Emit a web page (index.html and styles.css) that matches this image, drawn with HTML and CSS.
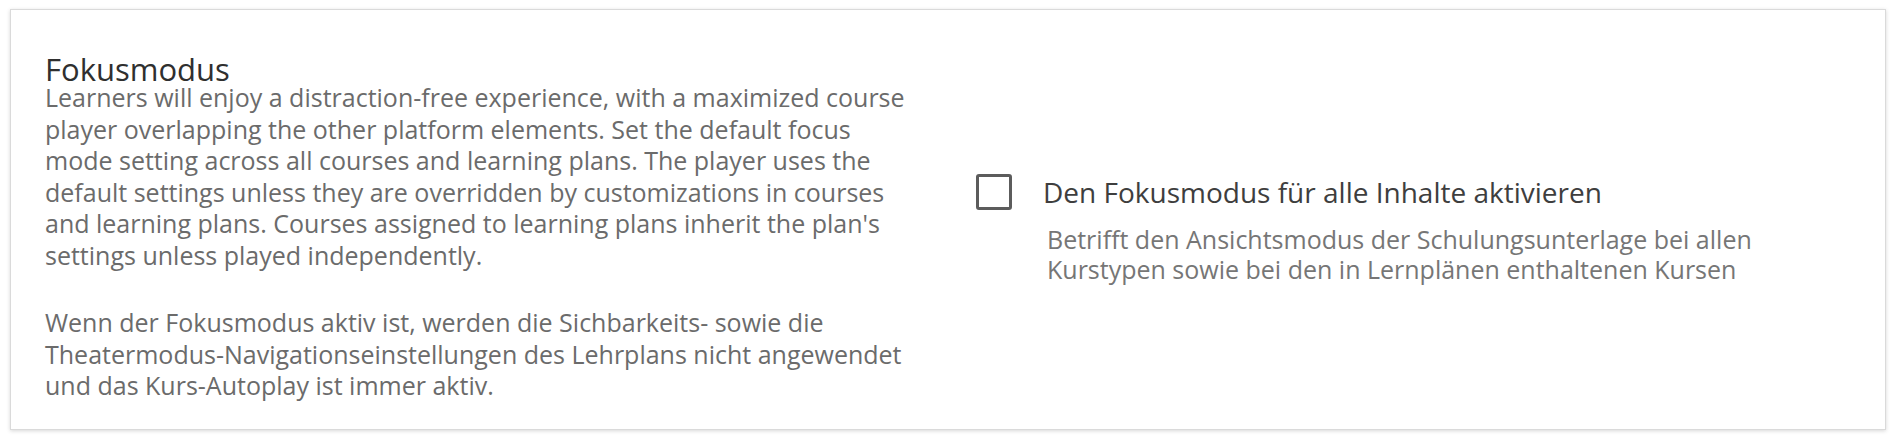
FILE: index.html
```html
<!DOCTYPE html>
<html lang="de">
<head>
<meta charset="utf-8">
<title>Fokusmodus</title>
<link rel="stylesheet" href="styles.css">
</head>
<body>
<section class="card">
  <div class="info">
    <h2 class="title">Fokusmodus</h2>
    <p class="desc">Learners will enjoy a distraction-free experience, with a maximized course player overlapping the other platform elements. Set the default focus mode setting across all courses and learning plans. The player uses the default settings unless they are overridden by customizations in courses and learning plans. Courses assigned to learning plans inherit the plan's settings unless played independently.</p>
    <p class="desc desc-second">Wenn der Fokusmodus aktiv ist, werden die Sichbarkeits- sowie die Theatermodus-Navigationseinstellungen des Lehrplans nicht angewendet und das Kurs-Autoplay ist immer aktiv.</p>
  </div>
  <div class="setting">
    <label class="check-row">
      <span class="checkbox" role="checkbox" aria-checked="false"></span>
      <span class="check-label">Den Fokusmodus für alle Inhalte aktivieren</span>
    </label>
    <p class="hint">Betrifft den Ansichtsmodus der Schulungsunterlage bei allen Kurstypen sowie bei den in Lernplänen enthaltenen Kursen</p>
  </div>
</section>
</body>
</html>
```

FILE: styles.css
```css
html, body {
  margin: 0;
  background: #ffffff;
}

body {
  padding: 9px 10px 10px 10px;
  font-family: "Open Sans", "Noto Sans", sans-serif;
}

.card {
  box-sizing: border-box;
  width: 1876px;
  border: 1px solid #dadada;
  box-shadow: 0 1px 4px rgba(0, 0, 0, 0.16);
  background: #fff;
  display: flex;
  align-items: center;
  padding: 38px 34px 27px 34px;
}

.info {
  width: 873px;
  flex: none;
}

.title {
  margin: 8px 0 0 0;
  font-size: 31px;
  line-height: 26px;
  font-weight: 400;
  color: #2f2f2f;
}

.desc {
  margin: 0;
  font-size: 25px;
  line-height: 31.5px;
  color: #6b6b6b;
}

.desc-second {
  margin-top: 36px;
}

.setting {
  margin-left: 58px;
  margin-top: 8px;
  display: flex;
  flex-direction: column;
}

.check-row {
  display: flex;
  align-items: center;
  gap: 31px;
}

.checkbox {
  box-sizing: border-box;
  width: 36px;
  height: 36px;
  border: 3px solid #5c5c5c;
  border-radius: 3px;
  flex: none;
}

.check-label {
  font-size: 28px;
  color: #3e3e3e;
}

.hint {
  margin: 13px 0 0 71px;
  font-size: 25px;
  line-height: 30px;
  color: #767676;
  width: 792px;
}
```
